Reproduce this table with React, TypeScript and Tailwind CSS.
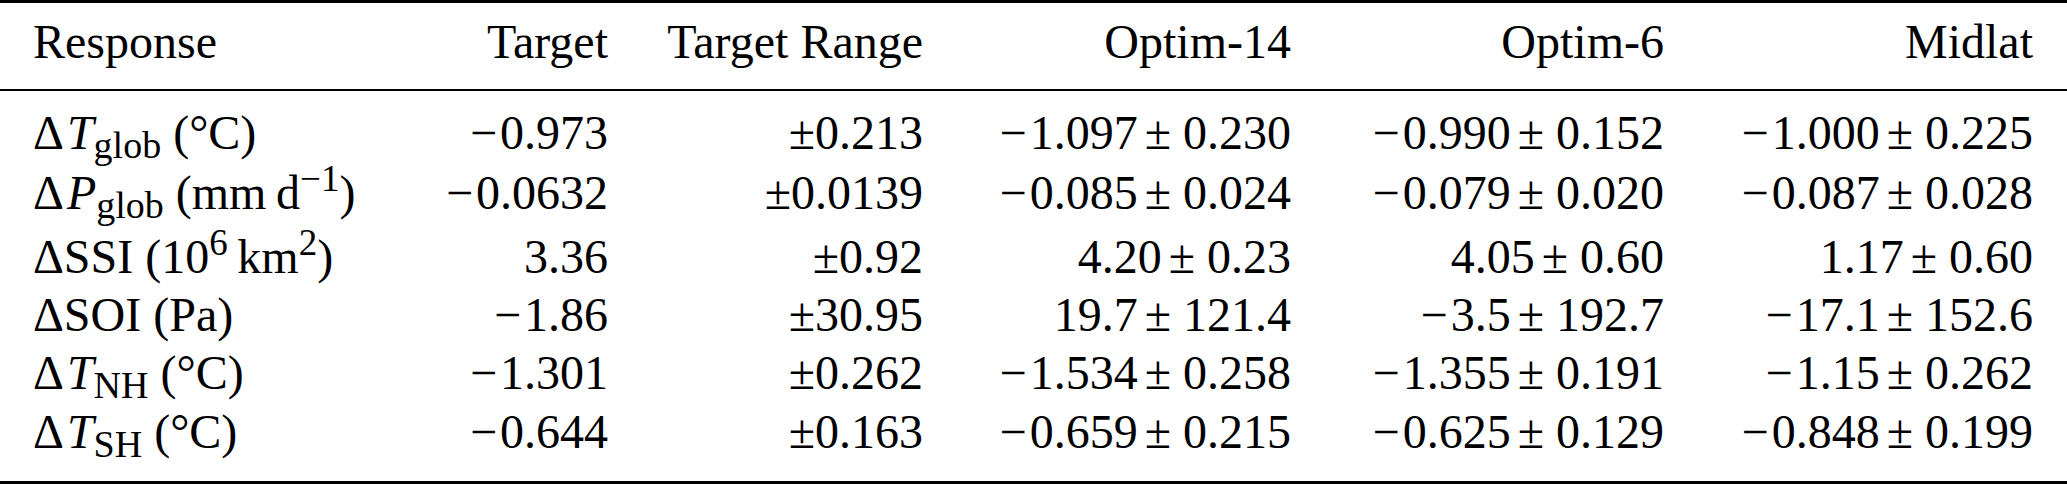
import React from 'react';

type Pm = [string, string];

interface Row {
  id: string;
  label: React.ReactNode;
  target: string;
  range: string;
  optim14: Pm;
  optim6: Pm;
  midlat: Pm;
  height: string;
}

const Sub = ({ children }: { children: React.ReactNode }) => (
  <span className="relative top-[9px] text-[38px] leading-none">{children}</span>
);

const Sup = ({ children }: { children: React.ReactNode }) => (
  <span className="relative top-[-18px] text-[37px] leading-none">{children}</span>
);

// math minus in the source is a touch wider than the text one
const Num = ({ v }: { v: string }) =>
  v.startsWith('−') ? (
    <>
      <span className="mr-[3px]">−</span>
      {v.slice(1)}
    </>
  ) : (
    <>{v}</>
  );

const rows: Row[] = [
  {
    id: 'tglob',
    label: (
      <>
        Δ<i className="ml-[3px]">T</i>
        <Sub>glob</Sub> (°C)
      </>
    ),
    target: '−0.973',
    range: '±0.213',
    optim14: ['−1.097', '0.230'],
    optim6: ['−0.990', '0.152'],
    midlat: ['−1.000', '0.225'],
    height: 'h-[79px] pt-[19px]',
  },
  {
    id: 'pglob',
    label: (
      <>
        Δ<i className="ml-[3px]">P</i>
        <Sub>glob</Sub> (mm{'\u2009'}d<Sup>−1</Sup>)
      </>
    ),
    target: '−0.0632',
    range: '±0.0139',
    optim14: ['−0.085', '0.024'],
    optim6: ['−0.079', '0.020'],
    midlat: ['−0.087', '0.028'],
    height: 'h-[64px]',
  },
  {
    id: 'ssi',
    label: (
      <>
        ΔSSI (10<Sup>6</Sup>
        {'\u2009'}km<Sup>2</Sup>)
      </>
    ),
    target: '3.36',
    range: '±0.92',
    optim14: ['4.20', '0.23'],
    optim6: ['4.05', '0.60'],
    midlat: ['1.17', '0.60'],
    height: 'h-[58px]',
  },
  {
    id: 'soi',
    label: <>ΔSOI (Pa)</>,
    target: '−1.86',
    range: '±30.95',
    optim14: ['19.7', '121.4'],
    optim6: ['−3.5', '192.7'],
    midlat: ['−17.1', '152.6'],
    height: 'h-[58px]',
  },
  {
    id: 'tnh',
    label: (
      <>
        Δ<i className="ml-[3px]">T</i>
        <Sub>NH</Sub> (°C)
      </>
    ),
    target: '−1.301',
    range: '±0.262',
    optim14: ['−1.534', '0.258'],
    optim6: ['−1.355', '0.191'],
    midlat: ['−1.15', '0.262'],
    height: 'h-[59px]',
  },
  {
    id: 'tsh',
    label: (
      <>
        Δ<i className="ml-[3px]">T</i>
        <Sub>SH</Sub> (°C)
      </>
    ),
    target: '−0.644',
    range: '±0.163',
    optim14: ['−0.659', '0.215'],
    optim6: ['−0.625', '0.129'],
    midlat: ['−0.848', '0.199'],
    height: 'h-[72px]',
  },
];

// column right edges: 608, 923, 1291, 1664, 2033
const grid = 'grid grid-cols-[403px_205px_315px_368px_373px_369px_34px] leading-[46px]';

const PlusMinus = ({ value }: { value: Pm }) => (
  <span className="text-right whitespace-nowrap">
    <Num v={value[0]} />
    <span className="ml-[7px] mr-[12px]">±</span>
    {value[1]}
  </span>
);

export default function App() {
  return (
    <div className="w-[2067px] h-[484px] bg-white text-black font-['Liberation_Serif'] text-[48px]">
      <div className="h-[3px] bg-black" />

      {/* header */}
      <div className={`${grid} h-[86px] pt-[16px]`}>
        <span className="pl-[33px]">Response</span>
        <span className="text-right">Target</span>
        <span className="text-right">Target Range</span>
        <span className="text-right">Optim-14</span>
        <span className="text-right">Optim-6</span>
        <span className="text-right">Midlat</span>
        <span />
      </div>

      <div className="h-[2px] bg-black" />

      {rows.map(row => (
        <div key={row.id} className={`${grid} ${row.height}`}>
          <span className="pl-[33px] whitespace-nowrap">{row.label}</span>
          <span className="text-right whitespace-nowrap">
            <Num v={row.target} />
          </span>
          <span className="text-right">{row.range}</span>
          <PlusMinus value={row.optim14} />
          <PlusMinus value={row.optim6} />
          <PlusMinus value={row.midlat} />
          <span />
        </div>
      ))}

      <div className="h-[3px] bg-black" />
    </div>
  );
}
